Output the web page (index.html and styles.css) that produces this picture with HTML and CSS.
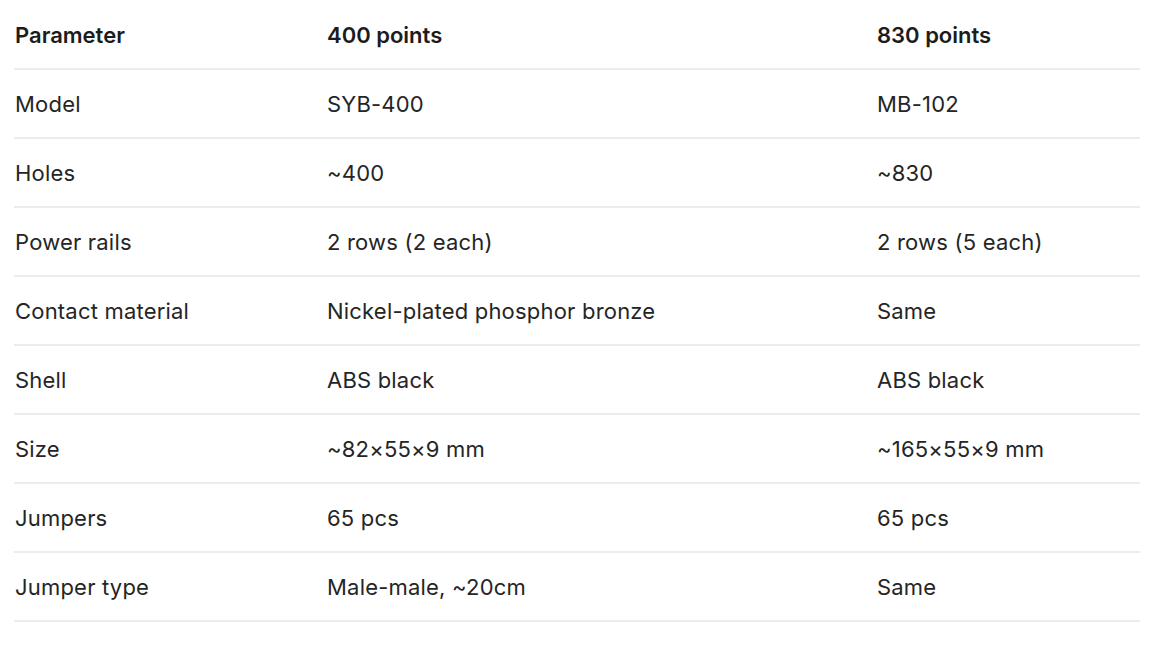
FILE: index.html
```html
<!DOCTYPE html>
<html lang="en">
<head>
<meta charset="utf-8">
<title>Breadboard comparison</title>
<link rel="stylesheet" href="styles.css">
</head>
<body>
<div class="spec-table">
  <div class="row head"><div>Parameter</div><div>400 points</div><div>830 points</div></div>
  <div class="row"><div>Model</div><div>SYB-400</div><div>MB-102</div></div>
  <div class="row"><div>Holes</div><div>~400</div><div>~830</div></div>
  <div class="row"><div>Power rails</div><div>2 rows (2 each)</div><div>2 rows (5 each)</div></div>
  <div class="row"><div>Contact material</div><div>Nickel-plated phosphor bronze</div><div>Same</div></div>
  <div class="row"><div>Shell</div><div>ABS black</div><div>ABS black</div></div>
  <div class="row"><div>Size</div><div>~82×55×9 mm</div><div>~165×55×9 mm</div></div>
  <div class="row"><div>Jumpers</div><div>65 pcs</div><div>65 pcs</div></div>
  <div class="row"><div>Jumper type</div><div>Male-male, ~20cm</div><div>Same</div></div>
</div>
</body>
</html>
```
FILE: styles.css
```css
html, body {
  margin: 0;
  padding: 0;
  background: #ffffff;
}
body {
  font-family: Inter, "Noto Sans", "Liberation Sans", sans-serif;
  font-size: 22px;
  color: #252525;
}
.spec-table {
  width: 1126px;
  margin-left: 14px;
  padding-top: 1px;
}
.row {
  display: grid;
  grid-template-columns: 312px 550px 1fr;
  align-items: center;
  height: 67px;
  border-bottom: 2px solid #ececec;
  letter-spacing: 0.2px;
}
.row > div {
  padding-left: 1px;
  white-space: nowrap;
}
.head {
  font-weight: 600;
  color: #1c1c1c;
  letter-spacing: 0;
}
```
